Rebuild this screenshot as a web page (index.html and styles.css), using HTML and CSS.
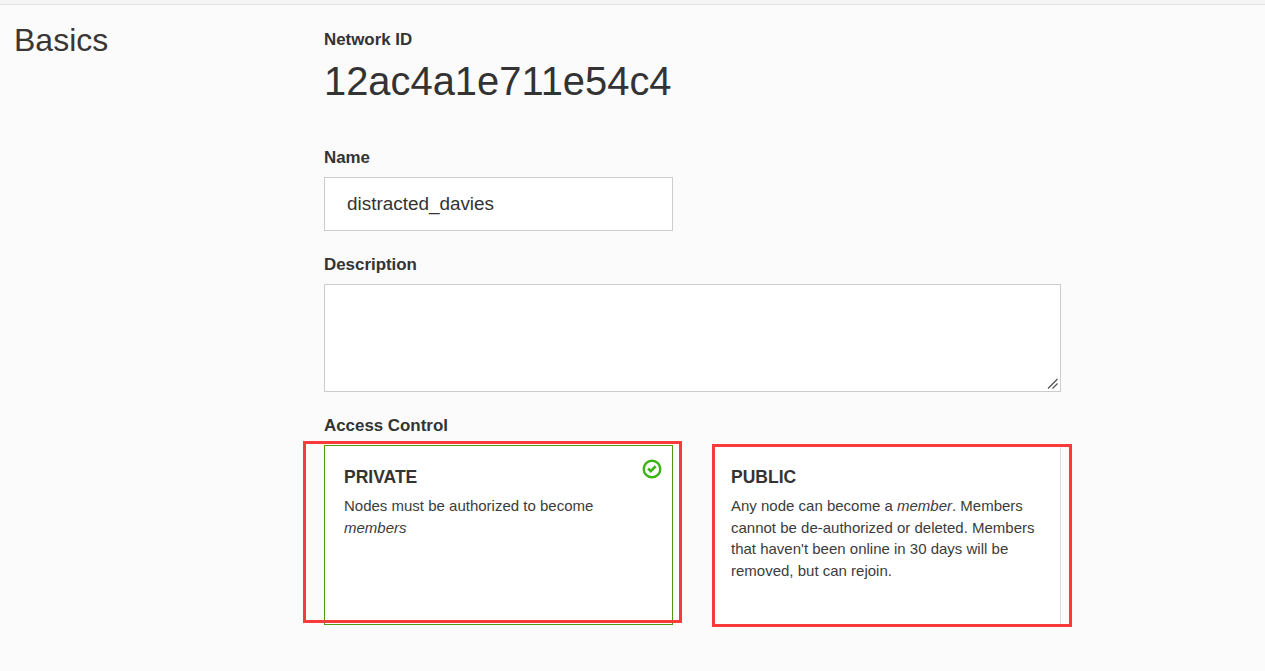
FILE: index.html
```html
<!DOCTYPE html>
<html lang="en">
<head>
    <meta charset="UTF-8">
    <meta name="viewport" content="width=device-width, initial-scale=1.0">
    <title>Basics</title>
    <link rel="stylesheet" href="styles.css">
</head>
<body>
    <div class="top-strip"></div>
    <main class="section">
        <h2 class="section-title">Basics</h2>
        <div class="section-body">
            <div class="label network-label">Network ID</div>
            <div class="network-id">12ac4a1e711e54c4</div>

            <label class="label name-label" for="name">Name</label>
            <input class="field name-input" id="name" type="text" value="distracted_davies">

            <label class="label description-label" for="description">Description</label>
            <textarea class="field description-input" id="description"></textarea>

            <div class="label access-label">Access Control</div>
            <div class="access-options">
                <div class="access-card access-card-selected">
                    <svg class="check-icon" viewBox="0 0 20 20" aria-hidden="true">
                        <circle cx="10" cy="10" r="8.3" fill="none" stroke="#3cb415" stroke-width="2.4"/>
                        <path d="M5.2 10.4l1.9-1.9 1.7 1.7 3.9-3.9 1.9 1.9-5.8 5.8z" fill="#3cb415"/>
                    </svg>
                    <h3 class="access-title">PRIVATE</h3>
                    <p class="access-text">Nodes must be authorized to become <em>members</em></p>
                </div>
                <div class="access-card access-card-public">
                    <h3 class="access-title">PUBLIC</h3>
                    <p class="access-text">Any node can become a <em>member</em>. Members cannot be de-authorized or deleted. Members that haven't been online in 30 days will be removed, but can rejoin.</p>
                </div>
                <div class="annotation annotation-private"></div>
                <div class="annotation annotation-public"></div>
            </div>
        </div>
    </main>
</body>
</html>
```

FILE: styles.css
```css
/* Basic styling for the body */
body {
    margin: 0;
    background-color: #fbfbfb;
    color: #333;
    font-family: "Liberation Sans", Arial, sans-serif;
}
/* Thin bar left at the top of the page */
.top-strip {
    height: 4px;
    background-color: #f5f5f5;
    border-bottom: 1px solid #e3e3e3;
}
/* Two column section */
.section {
    display: flex;
    padding: 0 14px 40px;
}
.section-title {
    width: 310px;
    margin: 17px 0 0;
    font-size: 32px;
    font-weight: 400;
    line-height: 36px;
    color: #3a3632;
}
.section-body {
    width: 737px;
    padding-top: 25px;
}
/* Labels above each field */
.label {
    display: block;
    font-size: 16.9px;
    font-weight: 700;
    line-height: 20px;
    color: #333;
}
.network-id {
    margin-top: 8px;
    font-size: 39.9px;
    font-weight: 400;
    line-height: 46px;
}
.name-label {
    margin-top: 44px;
}
.description-label {
    margin-top: 24px;
}
.access-label {
    margin-top: 24px;
}
/* Inputs */
.field {
    display: block;
    box-sizing: border-box;
    margin-top: 9px;
    background-color: #fff;
    border: 1px solid #ccc;
    font-family: inherit;
    color: #333;
}
.name-input {
    width: 349px;
    height: 54px;
    padding: 0 22px;
    font-size: 18.9px;
}
.description-input {
    width: 737px;
    height: 108px;
}
/* Darker resize grip, as in the original browser */
.description-input::-webkit-resizer {
    background: url("data:image/svg+xml,%3Csvg xmlns='http://www.w3.org/2000/svg' width='15' height='15'%3E%3Cpath d='M3 12.5L12.5 3M7.5 12.5l5-5' stroke='%23555' stroke-width='1.3' fill='none'/%3E%3C/svg%3E") no-repeat;
}
/* Access control cards */
.access-options {
    position: relative;
    display: grid;
    grid-template-columns: 349px 349px;
    column-gap: 39px;
    margin-top: 9px;
}
.access-card {
    position: relative;
    box-sizing: border-box;
    height: 180px;
    padding: 20px 19px;
    background-color: #fff;
}
.access-card-selected {
    padding-top: 19px;
    border: 1px solid #4f9a0f;
}
.access-card-public {
    border-right: 1px solid #ddd;
}
.access-title {
    margin: 0 0 6px;
    font-size: 17.5px;
    font-weight: 700;
    line-height: 24px;
}
.access-text {
    margin: 0;
    font-size: 15px;
    line-height: 21.6px;
    color: #3c3c3c;
}
.check-icon {
    position: absolute;
    top: 13px;
    right: 10px;
    width: 20px;
    height: 20px;
}
/* Red boxes drawn over the screenshot */
.annotation {
    position: absolute;
    box-sizing: border-box;
    border: 3px solid #f83a3a;
}
.annotation-private {
    top: -4px;
    left: -21px;
    width: 379px;
    height: 182px;
}
.annotation-public {
    top: -1px;
    left: 388px;
    width: 360px;
    height: 183px;
}
```
